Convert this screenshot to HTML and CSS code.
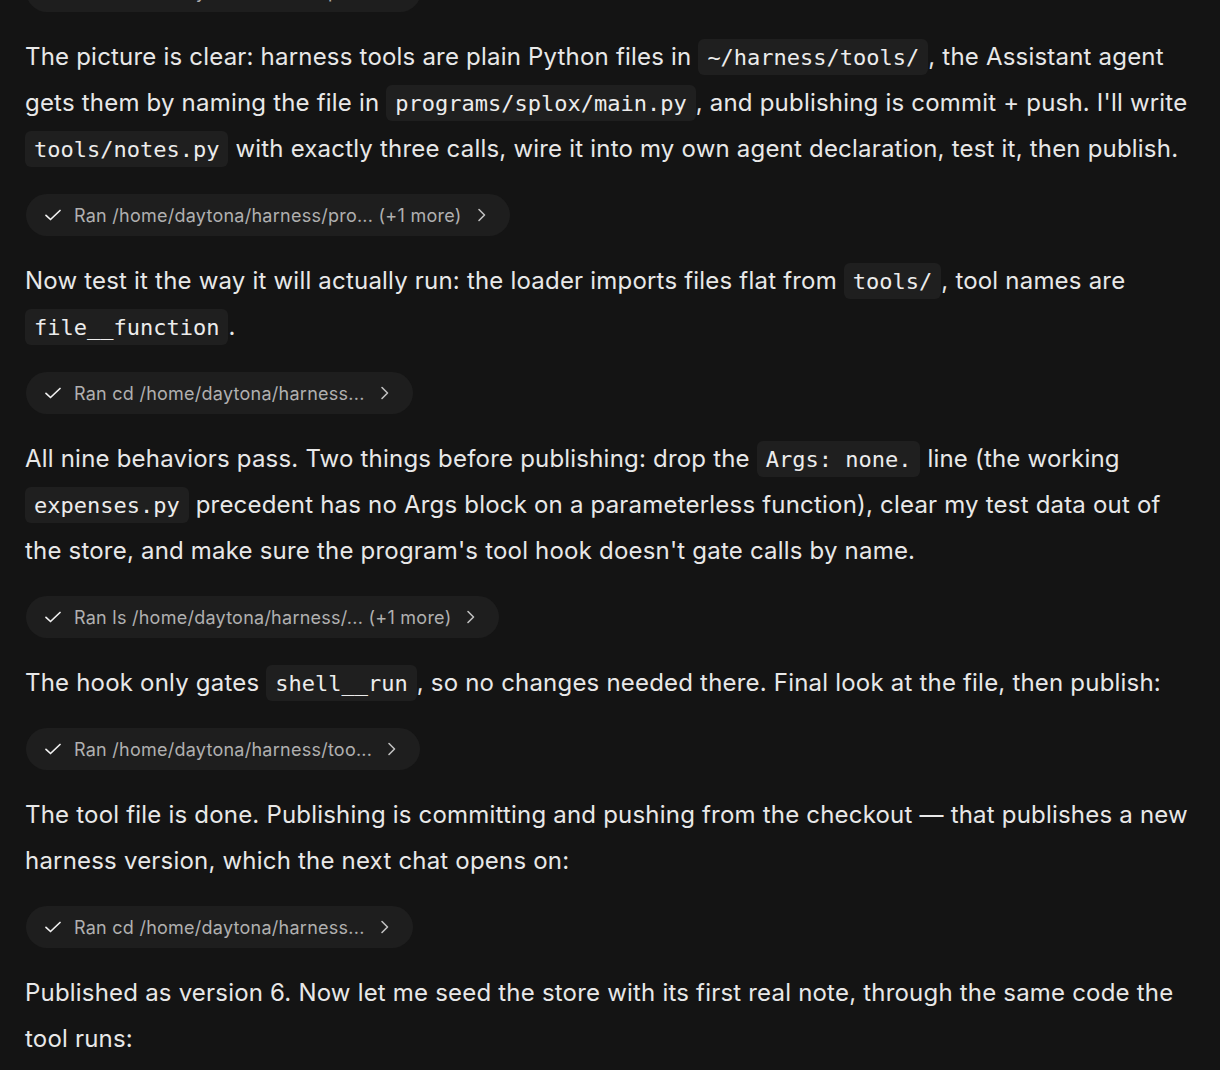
FILE: index.html
```html
<!DOCTYPE html>
<html lang="en">
<head>
<meta charset="utf-8">
<title>Chat transcript</title>
<link rel="stylesheet" href="styles.css">
</head>
<body>
<main class="thread">
  <div class="run run-clipped">
    <svg class="check" viewBox="0 0 16 16"><path d="M1 8.3l4.5 4.2L15 3.5"/></svg>
    <span class="run-label">Ran /home/daytona/harness/pro...</span>
    <svg class="chev" viewBox="0 0 16 16"><path d="M5 2.5l5.5 5.5L5 13.5"/></svg>
  </div>

  <p class="msg">The picture is clear: harness tools are plain Python files in <code>~/harness/tools/</code>, the Assistant agent gets them by naming the file in <code>programs/splox/main.py</code>, and publishing is commit + push. I'll write <code>tools/notes.py</code> with exactly three calls, wire it into my own agent declaration, test it, then publish.</p>

  <div class="run">
    <svg class="check" viewBox="0 0 16 16"><path d="M1 8.3l4.5 4.2L15 3.5"/></svg>
    <span class="run-label">Ran /home/daytona/harness/pro... (+1 more)</span>
    <svg class="chev" viewBox="0 0 16 16"><path d="M5 2.5l5.5 5.5L5 13.5"/></svg>
  </div>

  <p class="msg">Now test it the way it will actually run: the loader imports files flat from <code>tools/</code>, tool names are <code>file__function</code>.</p>

  <div class="run">
    <svg class="check" viewBox="0 0 16 16"><path d="M1 8.3l4.5 4.2L15 3.5"/></svg>
    <span class="run-label">Ran cd /home/daytona/harness...</span>
    <svg class="chev" viewBox="0 0 16 16"><path d="M5 2.5l5.5 5.5L5 13.5"/></svg>
  </div>

  <p class="msg">All nine behaviors pass. Two things before publishing: drop the <code>Args: none.</code> line (the working <code>expenses.py</code> precedent has no Args block on a parameterless function), clear my test data out of the store, and make sure the program's tool hook doesn't gate calls by name.</p>

  <div class="run">
    <svg class="check" viewBox="0 0 16 16"><path d="M1 8.3l4.5 4.2L15 3.5"/></svg>
    <span class="run-label">Ran ls /home/daytona/harness/... (+1 more)</span>
    <svg class="chev" viewBox="0 0 16 16"><path d="M5 2.5l5.5 5.5L5 13.5"/></svg>
  </div>

  <p class="msg">The hook only gates <code>shell__run</code>, so no changes needed there. Final look at the file, then publish:</p>

  <div class="run">
    <svg class="check" viewBox="0 0 16 16"><path d="M1 8.3l4.5 4.2L15 3.5"/></svg>
    <span class="run-label">Ran /home/daytona/harness/too...</span>
    <svg class="chev" viewBox="0 0 16 16"><path d="M5 2.5l5.5 5.5L5 13.5"/></svg>
  </div>

  <p class="msg">The tool file is done. Publishing is committing and pushing from the checkout — that publishes a new harness version, which the next chat opens on:</p>

  <div class="run">
    <svg class="check" viewBox="0 0 16 16"><path d="M1 8.3l4.5 4.2L15 3.5"/></svg>
    <span class="run-label">Ran cd /home/daytona/harness...</span>
    <svg class="chev" viewBox="0 0 16 16"><path d="M5 2.5l5.5 5.5L5 13.5"/></svg>
  </div>

  <p class="msg">Published as version 6. Now let me seed the store with its first real note, through the same code the tool runs:</p>
</main>
</body>
</html>
```

FILE: styles.css
```css
html, body {
  margin: 0;
  padding: 0;
  background: #141414;
}

.thread {
  display: flex;
  flex-direction: column;
  align-items: flex-start;
  gap: 22px;
  padding: 0 25px;
  width: 1170px;
  font-family: "Inter", "Noto Sans", sans-serif;
  color: #e8e8e8;
}

.msg {
  margin: 0;
  font-size: 24px;
  line-height: 46px;
  letter-spacing: 0.2px;
}

.msg code {
  font-family: "DejaVu Sans Mono", "Liberation Mono", monospace;
  font-size: 22px;
  line-height: 0;
  background: #1f1f1f;
  border-radius: 6px;
  padding: 6px 9px 5px;
  color: #ececec;
  letter-spacing: 0;
}

.run {
  display: flex;
  align-items: center;
  height: 42px;
  padding: 0 20px 0 19px;
  margin-left: 1px;
  border-radius: 21px;
  background: #1e1e1e;
  color: #b0b0b0;
  font-size: 18px;
  letter-spacing: 0.25px;
}

.run-clipped {
  margin-top: -30px;
}

.check {
  flex: none;
  width: 16px;
  height: 16px;
  margin-right: 13px;
  fill: none;
  stroke: #f0f0f0;
  stroke-width: 1.7;
  stroke-linecap: round;
  stroke-linejoin: round;
}

.run-label {
  white-space: nowrap;
}

.chev {
  flex: none;
  width: 16px;
  height: 16px;
  margin-left: 12px;
  fill: none;
  stroke: #c0c0c0;
  stroke-width: 1.6;
  stroke-linecap: round;
  stroke-linejoin: round;
}
```
